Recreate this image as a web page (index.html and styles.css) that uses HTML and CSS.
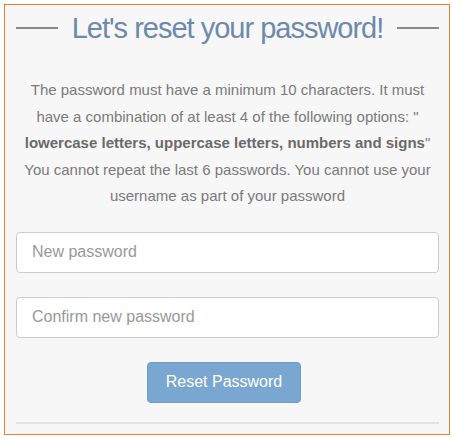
FILE: index.html
```html
<!DOCTYPE html>
<html>
<head>
<meta charset="utf-8">
<link rel="stylesheet" href="styles.css">
</head>
<body>
<div class="panel">
  <div class="title-row">
    <span class="rule"></span>
    <h1 class="title">Let's reset your password!</h1>
    <span class="rule"></span>
  </div>
  <p class="info">The password must have a minimum 10 characters. It must have a combination of at least 4 of the following options: " <b>lowercase letters, uppercase letters, numbers and signs</b>" You cannot repeat the last 6 passwords. You cannot use your username as part of your password</p>
  <input class="field" type="password" placeholder="New password">
  <input class="field" type="password" placeholder="Confirm new password">
  <div class="actions">
    <button class="btn">Reset Password</button>
  </div>
  <div class="bottom-rule"></div>
</div>
</body>
</html>
```
FILE: styles.css
```css
html, body {
  margin: 0;
  padding: 0;
  background: #ffffff;
  font-family: "Liberation Sans", Arial, sans-serif;
}
.panel {
  margin: 4px 0 0 4px;
  width: 423px;
  height: 429px;
  border: 1px solid #f07f2a;
  background: #f7f7f7;
  padding: 0 10px 0 11px;
  display: flex;
  flex-direction: column;
}
.title-row {
  display: flex;
  align-items: center;
  gap: 14px;
  height: 46px;
}
.rule {
  flex: 1;
  height: 2px;
  background: #8a8a8a;
}
.title {
  margin: 0;
  font-size: 29px;
  font-weight: normal;
  color: #6d89ab;
  letter-spacing: -1px;
  white-space: nowrap;
}
.info {
  margin: 26px 0 0 0;
  padding: 0 2px;
  font-size: 15px;
  line-height: 26.5px;
  color: #7a7a7a;
  text-align: center;
}
.info b {
  color: #6a6a6a;
}
.field {
  margin: 22px 0 0 0;
  height: 41px;
  box-sizing: border-box;
  border: 1px solid #cccccc;
  border-radius: 4px;
  background: #fff;
  padding: 0 15px;
  font-family: "Liberation Sans", Arial, sans-serif;
  font-size: 16px;
  color: #555;
  outline: none;
}
.field + .field {
  margin-top: 24px;
}
.field::placeholder {
  color: #999;
}
.actions {
  display: flex;
  justify-content: center;
  margin-top: 24px;
  padding-right: 7px;
}
.btn {
  width: 154px;
  height: 41px;
  background: #79a7d1;
  border: 1px solid #6f9dc8;
  border-radius: 4px;
  color: #fff;
  font-family: "Liberation Sans", Arial, sans-serif;
  font-size: 16px;
  padding: 0;
}
.bottom-rule {
  margin-top: 19px;
  height: 2px;
  background: #e3e3e3;
}
```
